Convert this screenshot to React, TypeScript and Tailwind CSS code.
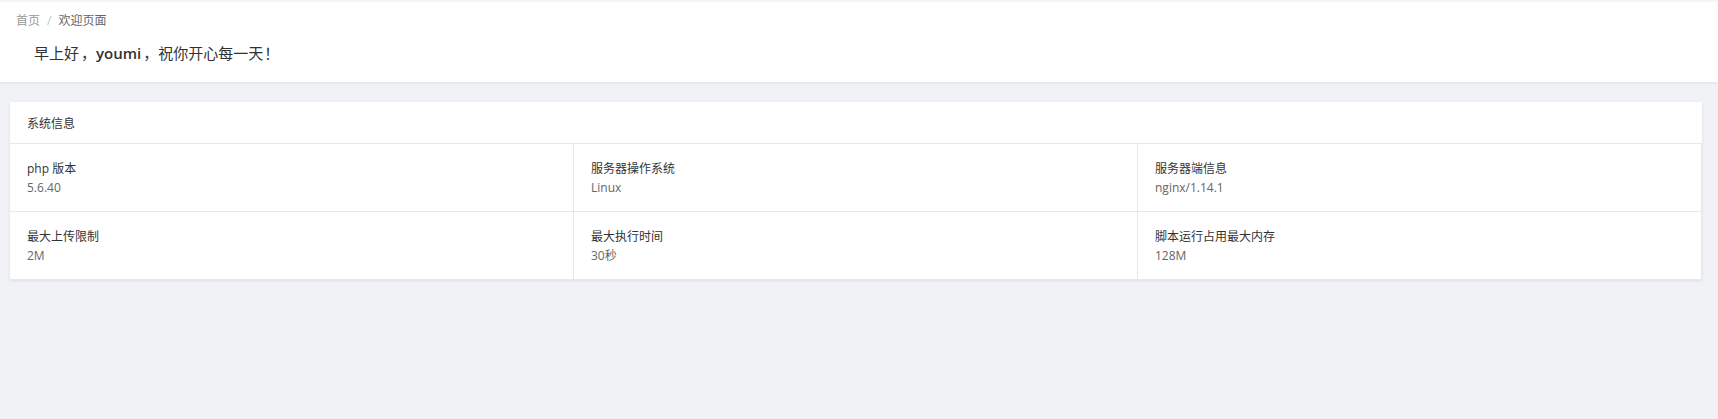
const rows = [
  [
    { label: "php 版本", value: "5.6.40" },
    { label: "服务器操作系统", value: "Linux" },
    { label: "服务器端信息", value: "nginx/1.14.1" },
  ],
  [
    { label: "最大上传限制", value: "2M" },
    { label: "最大执行时间", value: "30秒" },
    { label: "脚本运行占用最大内存", value: "128M" },
  ],
];

export default function App() {
  return (
    <div
      className="min-h-[419px] w-[1718px] bg-[#f0f2f5] text-[12px] text-[#333]"
      style={{ fontFamily: '"Open Sans", "Noto Sans CJK SC", sans-serif' }}
    >
      <header className="h-[83px] border-t-2 border-b border-t-[#f5f5f5] border-b-[#e6e6e6] bg-white shadow-[0_1px_2px_rgba(0,0,0,0.04)]">
        <nav className="flex items-center pl-[16px] pt-[11px] leading-[16px]">
          <span className="text-[#999]">首页</span>
          <span className="mx-[7px] text-[#c0c4cc]">/</span>
          <span className="text-[#666]">欢迎页面</span>
        </nav>
        <p className="mt-[13px] pl-[34px] text-[15px] leading-[22px] text-[#303133]">
          早上好<span className="pl-[2px]">，</span><span className="font-semibold">youmi</span><span className="pl-[2px]">，</span>祝你开心每一天<span className="pl-[1px]">！</span>
        </p>
      </header>

      <section className="ml-[10px] mt-[19px] w-[1692px] bg-white shadow-[0_1px_3px_rgba(0,0,0,0.08)]">
        <div className="flex h-[42px] items-center border-b border-[#e8e8e8] px-[17px] pt-[2px]">
          系统信息
        </div>
        {rows.map((row, i) => (
          <div key={i} className="grid grid-cols-3">
            {row.map((cell) => (
              <div key={cell.label} className="h-[68px] border-r border-b border-[#e8e8e8] px-[17px] pt-[15px] leading-[19px]">
                <p className="text-[#333]">{cell.label}</p>
                <p className="text-[#666]">{cell.value}</p>
              </div>
            ))}
          </div>
        ))}
      </section>
    </div>
  );
}
